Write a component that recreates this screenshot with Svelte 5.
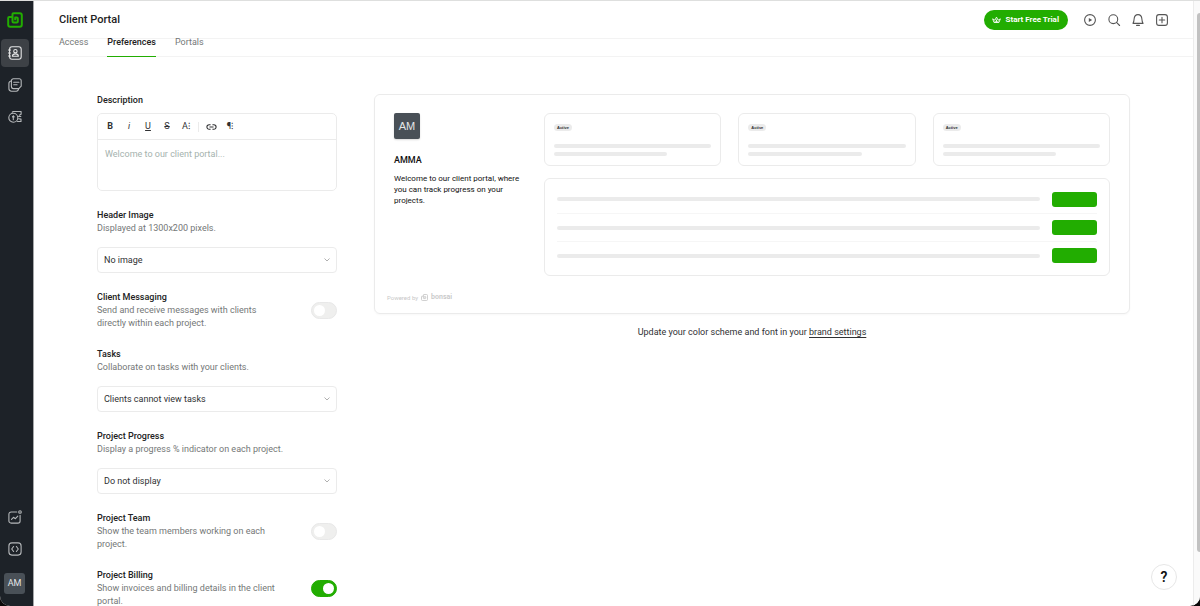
<script lang="ts">
	const tabs = ['Access', 'Preferences', 'Portals'];
	const cards = [1, 2, 3];
	const rows = [1, 2, 3];

	let activeTab = $state('Preferences');
	let welcome = $state('');
	let messaging = $state(false);
	let team = $state(false);
	let billing = $state(true);
</script>

{#snippet logo()}
	<svg viewBox="0 0 16 16" fill="none" stroke="currentColor" stroke-width="2" stroke-linejoin="round">
		<path d="M5.500 5H2.200a1 1 0 0 0-1 1v6.800a2 2 0 0 0 2 2h9.600a2 2 0 0 0 2-2V3.200a2 2 0 0 0-2-2H6.500a1 1 0 0 0-1 1V9.500a1 1 0 0 0 1 1h3.300a1 1 0 0 0 1-1V6.600a1 1 0 0 0-1-1H8.200v2.600" />
	</svg>
{/snippet}

{#snippet toggle(id: string, checked: boolean, onchange: (value: boolean) => void)}
	<input
		{id}
		class="toggle"
		type="checkbox"
		role="switch"
		{checked}
		onchange={(e) => onchange(e.currentTarget.checked)}
	/>
{/snippet}

{#snippet dropdown(id: string, options: string[])}
	<div class="select">
		<select {id}>
			{#each options as option}
				<option>{option}</option>
			{/each}
		</select>
		<svg viewBox="0 0 8 6" fill="none" stroke="currentColor"><path d="M1.500 1.500 4 4 6.500 1.500" /></svg>
	</div>
{/snippet}

<div class="app">
	<nav class="sidebar" aria-label="Main">
		<a class="brand" href="/" aria-label="Home">{@render logo()}</a>
		<a class="nav-item active" href="/clients" aria-label="Clients">
			<svg class="icon" viewBox="0 0 14 14">
				<rect x="1.6" y="0.8" width="11.6" height="12.4" rx="2.4" />
				<circle cx="7.4" cy="5.2" r="1.7" />
				<path d="M4.4 10.3c0-1.6 1.2-2.4 3-2.4s3 .8 3 2.4z" />
				<path d="M.5 4h2M.5 7h2M.5 10h2" />
			</svg>
		</a>
		<a class="nav-item" href="/projects" aria-label="Projects">
			<svg class="icon" viewBox="0 0 14 14">
				<path d="M5.4.8h5.8a2 2 0 0 1 2 2v5.4l-2.4 2.4H5.4a2 2 0 0 1-2-2V2.8a2 2 0 0 1 2-2z" />
				<path d="M3.4 3C1.6 3.2.9 3.8.9 5.4v5.2c0 1.8.8 2.6 2.6 2.6h4.8c1.3 0 2-.5 2.4-2.6" />
				<path d="M5.7 4.2h5.2M5.7 6.700h3.4" />
			</svg>
		</a>
		<a class="nav-item" href="/finance" aria-label="Finance">
			<svg class="icon" viewBox="0 0 14 14">
				<circle cx="5.3" cy="7.8" r="4.500" />
				<path d="M4.200 2.200 5.200 1.500h7.900v2.800l-1.800.9M10.500 6.500h2.300M10.500 8.800l2.500.3v2.400H9.500M5.300 5.800v4M4.400 6.800l.9-1 .9 1" />
			</svg>
		</a>
		<div class="spacer"></div>
		<a class="nav-item" href="/reports" aria-label="Reports">
			<svg class="icon" viewBox="0 0 14 14">
				<path d="M8.8 2H3.1A2.2 2.2 0 0 0 .9 4.2v6.7a2.2 2.2 0 0 0 2.2 2.2h6.8a2.2 2.2 0 0 0 2.2-2.2V5.3M3.5 9.3l2-2 1.9 1.4 2.4-2.5" />
				<circle cx="12" cy="2" r="1.3" />
			</svg>
		</a>
		<a class="nav-item" href="/developers" aria-label="Developers">
			<svg class="icon" viewBox="0 0 14 14">
				<rect x="0.9" y="0.9" width="12.2" height="12.2" rx="3" />
				<path d="M5.6 4.5 3.7 7l1.9 2.5M8.4 4.5 10.3 7 8.4 9.5" />
			</svg>
		</a>
		<button class="account" type="button">AM</button>
	</nav>

	<div class="page">
		<header>
			<h1>Client Portal</h1>
			<div class="actions">
				<button class="trial" type="button">
					<svg viewBox="0 0 10 8" fill="none" stroke="currentColor" stroke-linejoin="round">
						<path d="M.7 2.700 2.300 6.800h5.400L9.300 2.700 6.800 4.200 5 .8 3.200 4.200z" />
						<path d="M5 3.500v3M3.500 5v1.500M6.500 5v1.500" />
					</svg>
					Start Free Trial
				</button>
				<button class="tool" type="button" aria-label="Watch tutorial">
					<svg class="icon" viewBox="0 0 14 14">
						<circle cx="7" cy="7" r="5.4" />
						<path d="M5.8 4.9v4.2L9.2 7z" fill="currentColor" stroke="none" />
					</svg>
				</button>
				<button class="tool" type="button" aria-label="Search">
					<svg class="icon" viewBox="0 0 14 14">
						<circle cx="6.3" cy="6.2" r="4.4" />
						<path d="m9.5 9.4 3.1 3.1" />
					</svg>
				</button>
				<button class="tool" type="button" aria-label="Notifications">
					<svg class="icon" viewBox="0 0 14 14">
						<path d="M2 10.4h10c-1-1.5-1-2.7-1.1-4.4C10.7 3.3 9.3 1.6 7 1.6S3.3 3.3 3.1 6C3 7.7 3 8.9 2 10.4zM5.6 12.4h2.8" />
					</svg>
				</button>
				<button class="tool" type="button" aria-label="Create">
					<svg class="icon" viewBox="0 0 14 14">
						<rect x="1.6" y="1.6" width="10.8" height="10.8" rx="2.4" />
						<path d="M7 4.3v5.4M4.3 7h5.4" />
					</svg>
				</button>
			</div>
		</header>

		<nav class="tabs" aria-label="Client portal">
			{#each tabs as tab}
				<a
					href="#{tab.toLowerCase()}"
					class:selected={tab === activeTab}
					aria-current={tab === activeTab ? 'page' : undefined}
					onclick={() => (activeTab = tab)}>{tab}</a
				>
			{/each}
		</nav>

		<main>
			<form class="settings">
				<section>
					<label for="description">Description</label>
					<div class="editor">
						<div class="toolbar">
							<button type="button" class="bold">B</button>
							<button type="button" class="italic">i</button>
							<button type="button" class="underline">U</button>
							<button type="button" class="strike">S</button>
							<button type="button">A⁝</button>
							<span class="divider"></span>
							<button type="button" aria-label="Link">
								<svg viewBox="0 0 12 8" fill="none" stroke="currentColor" stroke-width="1.2">
									<path d="M5 1.5H3.5a2.5 2.5 0 0 0 0 5H5M7 1.5h1.5a2.5 2.5 0 0 1 0 5H7M3.8 4h4.4" />
								</svg>
							</button>
							<button type="button">¶⁝</button>
						</div>
						<textarea id="description" placeholder="Welcome to our client portal..." bind:value={welcome}></textarea>
					</div>
				</section>

				<section>
					<label for="header-image">Header Image</label>
					<p>Displayed at 1300x200 pixels.</p>
					{@render dropdown('header-image', ['No image', 'Upload image'])}
				</section>

				<section class="switch-row">
					<div>
						<label for="messaging">Client Messaging</label>
						<p>Send and receive messages with clients directly within each project.</p>
					</div>
					{@render toggle('messaging', messaging, (v) => (messaging = v))}
				</section>

				<section>
					<label for="tasks">Tasks</label>
					<p>Collaborate on tasks with your clients.</p>
					{@render dropdown('tasks', ['Clients cannot view tasks', 'Clients can view tasks'])}
				</section>

				<section>
					<label for="progress">Project Progress</label>
					<p>Display a progress % indicator on each project.</p>
					{@render dropdown('progress', ['Do not display', 'Display'])}
				</section>

				<section class="switch-row">
					<div>
						<label for="team">Project Team</label>
						<p>Show the team members working on each project.</p>
					</div>
					{@render toggle('team', team, (v) => (team = v))}
				</section>

				<section class="switch-row">
					<div>
						<label for="billing">Project Billing</label>
						<p>Show invoices and billing details in the client portal.</p>
					</div>
					{@render toggle('billing', billing, (v) => (billing = v))}
				</section>
			</form>

			<div class="preview-column">
				<article class="preview">
					<div class="preview-body">
						<div class="intro">
							<div class="avatar">AM</div>
							<h2>AMMA</h2>
							<p>{welcome || 'Welcome to our client portal, where you can track progress on your projects.'}</p>
						</div>
						<div class="content">
							<div class="cards">
								{#each cards as card (card)}
									<div class="card">
										<span class="badge">Active</span>
										<div class="bar"></div>
										<div class="bar short"></div>
									</div>
								{/each}
							</div>
							<div class="list">
								{#each rows as row (row)}
									<div class="row">
										<div class="bar"></div>
										<div class="cta"></div>
									</div>
								{/each}
							</div>
						</div>
					</div>
					<footer>Powered by <span class="mark">{@render logo()}</span><strong>bonsai</strong></footer>
				</article>
				<p class="hint">Update your color scheme and font in your <a href="/settings/brand">brand settings</a></p>
			</div>
		</main>
	</div>

	<div class="scrollbar"><div class="thumb"></div></div>
	<button class="help" type="button" aria-label="Help">?</button>
</div>

<style>
	:global(body) {
		background: #0b0909;
	}

	.app {
		--text: #303133;
		--muted: #747777;
		--line: #ebebeb;
		--green: #22ad01;
		display: flex;
		box-sizing: border-box;
		height: 100vh;
		overflow: hidden;
		border-top: 1px solid #dedfde;
		border-radius: 0 0 10px 10px;
		background: #fff;
		color: var(--text);
		font-family: Roboto, 'Liberation Sans', sans-serif;
		font-size: 9px;
		line-height: 13px;
	}

	.app *,
	.app *::before {
		box-sizing: border-box;
	}

	button,
	select,
	textarea {
		margin: 0;
		padding: 0;
		border: 0;
		background: none;
		color: inherit;
		font: inherit;
	}

	h1,
	h2,
	p {
		margin: 0;
	}

	svg {
		display: block;
	}

	.icon {
		width: 14px;
		height: 14px;
		fill: none;
		stroke: currentColor;
		stroke-width: 1.1;
		stroke-linecap: round;
		stroke-linejoin: round;
	}

	.sidebar {
		display: flex;
		flex: none;
		flex-direction: column;
		align-items: center;
		gap: 4px;
		width: 34px;
		padding: 11px 5px 12px 1px;
		border-right: 1px solid #a5a7a9;
		background: #1d2228;
		color: #b5b8ba;
	}

	.brand {
		margin-bottom: 7px;
		color: var(--green);
	}

	.brand svg {
		width: 16px;
		height: 16px;
	}

	.nav-item {
		display: grid;
		place-items: center;
		width: 28px;
		height: 28px;
		border-radius: 4px;
		color: inherit;
	}

	.nav-item.active {
		background: #3d4146;
		color: #e4e5e6;
	}

	.spacer {
		flex: 1;
	}

	.account {
		width: 21px;
		height: 21px;
		margin-top: 6px;
		border-radius: 3px;
		background: #495057;
		color: #e4e5e6;
		text-align: center;
	}

	.page {
		flex: 1;
		min-width: 0;
	}

	header {
		display: flex;
		align-items: center;
		justify-content: space-between;
		height: 38px;
		padding: 0 24px 0 25px;
		border-bottom: 1px solid #f3f3f3;
	}

	h1 {
		color: #222;
		font-size: 11px;
		font-weight: 500;
	}

	.actions {
		display: flex;
		align-items: center;
		gap: 10px;
	}

	.trial {
		display: flex;
		align-items: center;
		gap: 5px;
		height: 20px;
		margin-right: 5px;
		padding: 0 9px 0 8px;
		border-radius: 10px;
		background: var(--green);
		color: #fff;
		font-size: 8px;
		font-weight: 700;
	}

	.trial svg {
		width: 9px;
		height: 8px;
	}

	.tool {
		color: #555;
	}

	.tabs {
		display: flex;
		gap: 19px;
		height: 18px;
		padding-left: 25px;
		border-bottom: 1px solid #f3f3f3;
	}

	.tabs a {
		height: 18px;
		border-bottom: 1px solid transparent;
		color: var(--muted);
		line-height: 7px;
		text-decoration: none;
	}

	.tabs .selected {
		border-color: var(--green);
		color: #222;
		font-weight: 500;
	}

	main {
		display: flex;
		gap: 37px;
		padding: 37px 63px;
	}

	.settings {
		display: flex;
		flex: none;
		flex-direction: column;
		gap: 18px;
		width: 240px;
	}

	.settings label {
		display: block;
		color: #222;
		font-weight: 500;
	}

	.settings p {
		color: var(--muted);
	}

	.editor {
		margin-top: 6px;
		border: 1px solid var(--line);
		border-radius: 5px;
	}

	.toolbar {
		display: flex;
		align-items: center;
		gap: 5px;
		height: 26px;
		padding: 0 5px;
		border-bottom: 1px solid var(--line);
	}

	.toolbar button {
		display: grid;
		place-items: center;
		width: 14px;
		height: 14px;
	}

	.toolbar svg {
		width: 11px;
		height: 8px;
	}

	.toolbar .bold {
		font-weight: 700;
	}

	.toolbar .italic {
		font-style: italic;
	}

	.toolbar .underline {
		text-decoration: underline;
	}

	.toolbar .strike {
		text-decoration: line-through;
	}

	.divider {
		width: 1px;
		height: 10px;
		background: var(--line);
	}

	textarea {
		display: block;
		width: 100%;
		height: 50px;
		padding: 8px 7px;
		outline: 0;
		resize: none;
	}

	textarea::placeholder {
		color: #a5b2ae;
		opacity: 1;
	}

	.select {
		display: grid;
		align-items: center;
		margin-top: 12px;
	}

	.select > * {
		grid-area: 1 / 1;
	}

	select {
		width: 100%;
		height: 26px;
		padding: 0 20px 0 6px;
		border: 1px solid var(--line);
		border-radius: 4px;
		appearance: none;
	}

	.select svg {
		justify-self: end;
		width: 8px;
		height: 6px;
		margin-right: 6px;
		color: #b0b0b0;
		pointer-events: none;
	}

	.switch-row {
		display: flex;
		align-items: center;
		justify-content: space-between;
		gap: 30px;
	}

	.toggle {
		flex: none;
		width: 26px;
		height: 17px;
		margin: 0;
		padding: 2px;
		border: 1px solid #e8e8e8;
		border-radius: 9px;
		background: #efefee;
		appearance: none;
	}

	.toggle::before {
		display: block;
		width: 11px;
		height: 11px;
		border-radius: 50%;
		background: #fff;
		content: '';
	}

	.toggle:checked {
		border-color: var(--green);
		background: var(--green);
	}

	.toggle:checked::before {
		margin-left: auto;
	}

	.preview-column {
		flex: 1;
		min-width: 0;
	}

	.preview {
		padding: 18px 19px 9px;
		border: 1px solid var(--line);
		border-radius: 6px;
		box-shadow: 0 1px 2px rgb(0 0 0 / 3%);
	}

	.preview-body {
		display: flex;
		gap: 22px;
	}

	.intro {
		flex: none;
		width: 128px;
		color: #111;
	}

	.avatar {
		display: grid;
		place-items: center;
		width: 26px;
		height: 26px;
		border-radius: 2px;
		background: #495057;
		box-shadow: 0 1px 2px rgb(0 0 0 / 15%);
		color: #e4e5e6;
		font-family: 'Liberation Sans', sans-serif;
		font-size: 11px;
	}

	h2 {
		margin-top: 15px;
		font-size: 9px;
		font-weight: 500;
	}

	.intro p {
		margin-top: 6px;
		font-size: 8px;
		line-height: 11px;
	}

	.content {
		flex: 1;
		min-width: 0;
	}

	.cards {
		display: grid;
		grid-template-columns: repeat(3, 1fr);
		gap: 17px;
	}

	.card,
	.list {
		border: 1px solid var(--line);
		border-radius: 6px;
	}

	.card {
		padding: 10px 9px 9px;
	}

	.badge {
		display: block;
		width: max-content;
		margin-bottom: 13px;
		padding: 0 3px;
		border-radius: 4px;
		background: #ebebeb;
		font-family: 'Liberation Sans', sans-serif;
		font-size: 4px;
		font-weight: 700;
		line-height: 7px;
	}

	.bar {
		height: 4px;
		border-radius: 2px;
		background: #ebebeb;
	}

	.short {
		width: 72%;
		margin-top: 4px;
	}

	.list {
		margin-top: 12px;
		padding: 6px 12px;
	}

	.row {
		display: flex;
		align-items: center;
		gap: 12px;
		height: 28px;
	}

	.row + .row {
		border-top: 1px solid #f6f6f6;
	}

	.row .bar {
		flex: 1;
	}

	.cta {
		width: 45px;
		height: 15px;
		border-radius: 3px;
		background: var(--green);
	}

	footer {
		display: flex;
		align-items: center;
		gap: 3px;
		margin: 15px 0 0 -7px;
		color: #c8c8c8;
		font-size: 6px;
	}

	footer strong {
		font-size: 7px;
		font-weight: 600;
	}

	.mark svg {
		width: 7px;
		height: 7px;
	}

	.hint {
		margin-top: 12px;
		text-align: center;
	}

	.hint a {
		color: inherit;
		text-underline-offset: 2px;
	}

	.scrollbar {
		flex: none;
		width: 7px;
		padding: 12px 0 54px 3px;
		border-left: 1px solid #ececec;
		background: #fafafa;
	}

	.thumb {
		height: 100%;
		border-radius: 3px 0 0 3px;
		background: #c1c1c1;
	}

	.help {
		position: fixed;
		right: 23px;
		bottom: 16px;
		width: 26px;
		height: 26px;
		border: 1px solid #e6e6e6;
		border-radius: 50%;
		background: #fff;
		color: #111;
		font-size: 14px;
		font-weight: 600;
	}
</style>
